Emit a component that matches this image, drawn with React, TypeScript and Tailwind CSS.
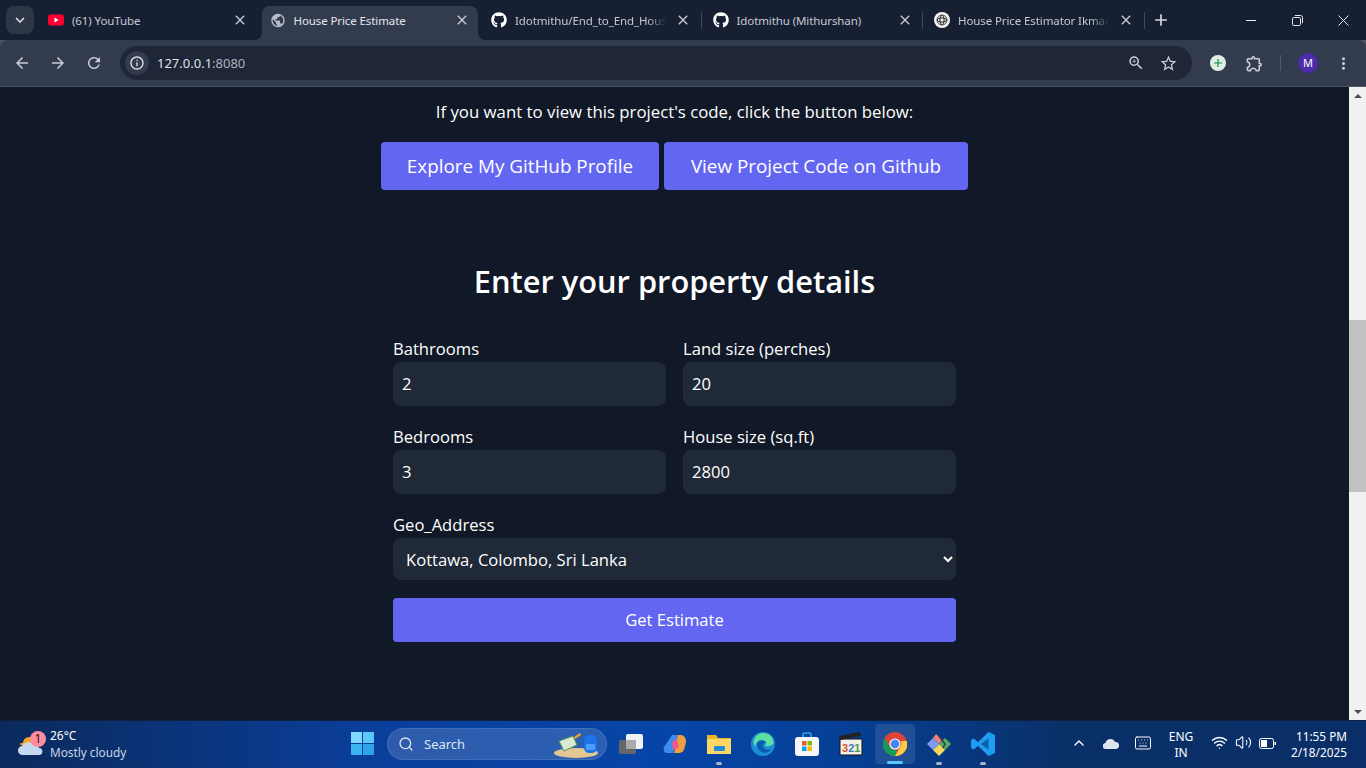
import { FaGithub } from "react-icons/fa";
import {
  MdArrowBack,
  MdArrowForward,
  MdRefresh,
  MdInfoOutline,
  MdStarBorder,
  MdOutlineExtension,
  MdMoreVert,
  MdZoomIn,
  MdPublic,
  MdClose,
  MdAdd,
  MdKeyboardArrowDown,
} from "react-icons/md";
import { ChevronUp, Search, Keyboard, Wifi, Volume2 } from "lucide-react";

const pageFont = "font-['Open_Sans',sans-serif]";
const uiFont = "font-['Noto_Sans',sans-serif]";

function YouTubeIcon() {
  return (
    <svg width="16" height="16" viewBox="0 0 16 16">
      <rect x="0" y="2.5" width="16" height="11" rx="3" fill="#ff0033" />
      <path d="M6.5 5.6 10.6 8l-4.1 2.4z" fill="#fff" />
    </svg>
  );
}

function GptIcon() {
  return (
    <svg width="16" height="16" viewBox="0 0 16 16">
      <circle cx="8" cy="8" r="8" fill="#f4f4f4" />
      <g fill="none" stroke="#333" strokeWidth="0.9">
        <circle cx="8" cy="8" r="5" />
        <circle cx="8" cy="8" r="3" strokeDasharray="1.5 1" />
        <ellipse cx="8" cy="8" rx="5" ry="2" />
        <ellipse cx="8" cy="8" rx="2" ry="5" />
      </g>
    </svg>
  );
}

type TabProps = {
  icon: React.ReactNode;
  title: string;
  active?: boolean;
  separator?: boolean;
  fade?: boolean;
};

function Tab({ icon, title, active, separator, fade }: TabProps) {
  return (
    <div
      className={`relative h-[34px] flex items-center pl-2 pb-[6px] rounded-t-lg ${
        active ? "bg-[#333c4e] w-[216px] mr-[5.5px]" : "w-[221.5px]"
      }`}
    >
      {active && (
        <>
          <span className="absolute left-[-8px] bottom-0 w-2 h-2 bg-[radial-gradient(circle_at_0_0,transparent_8px,#333c4e_8px)]" />
          <span className="absolute right-[-8px] bottom-0 w-2 h-2 bg-[radial-gradient(circle_at_100%_0,transparent_8px,#333c4e_8px)]" />
        </>
      )}
      <span className="w-4 h-4 flex items-center justify-center shrink-0">{icon}</span>
      <span
        className={`ml-2 pt-[1px] w-[156px] whitespace-nowrap overflow-hidden text-[11.5px] tracking-[-0.1px] ${
          active ? "text-[#e3e6ea]" : "text-[#c5cad3]"
        } ${fade ? "[mask-image:linear-gradient(to_right,black_85%,transparent_97%)]" : ""}`}
      >
        {title}
      </span>
      <MdClose className="ml-1 shrink-0 text-[#c9ced6]" size={16} />
      {separator && <span className="absolute right-[3px] top-[6px] h-[17px] w-px bg-[#414a5b]" />}
    </div>
  );
}

function TabStrip() {
  return (
    <div className="h-10 bg-[#172032] flex items-end pl-1 shrink-0 relative">
      <div className="absolute left-[6px] top-[6px] w-[28px] h-[28px] rounded-lg bg-[#2e3748] flex items-center justify-center">
        <MdKeyboardArrowDown className="text-[#e3e6ea]" size={18} />
      </div>
      <div className="ml-9 flex items-center self-end">
        <Tab icon={<YouTubeIcon />} title="(61) YouTube" />
        <Tab icon={<MdPublic className="text-[#b7bdc8]" size={17} />} title="House Price Estimate" active />
        <Tab icon={<FaGithub className="text-white" size={16} />} title="Idotmithu/End_to_End_Hous" separator fade />
        <Tab icon={<FaGithub className="text-white" size={16} />} title="Idotmithu (Mithurshan)" separator />
        <Tab icon={<GptIcon />} title="House Price Estimator Ikman" separator fade />
        <span className="ml-[3px] pb-[6px]">
          <MdAdd className="text-[#d5d9df]" size={20} />
        </span>
      </div>
      <div className="ml-auto flex h-full items-center text-[#e6e8ec]">
        <span className="w-[46px] flex justify-center">
          <span className="block w-[10px] h-px bg-[#e6e8ec]" />
        </span>
        <span className="w-[46px] flex justify-center">
          <svg width="11" height="11" viewBox="0 0 11 11" fill="none" stroke="#e6e8ec">
            <rect x="0.5" y="2.5" width="8" height="8" rx="1.2" />
            <path d="M2.8 0.5h5.7a2 2 0 0 1 2 2v5.7" />
          </svg>
        </span>
        <span className="w-[46px] flex justify-center">
          <svg width="11" height="11" viewBox="0 0 11 11" stroke="#e6e8ec">
            <path d="M0.5 0.5l10 10M10.5 0.5l-10 10" />
          </svg>
        </span>
      </div>
    </div>
  );
}

function Toolbar() {
  return (
    <div className="h-[47px] shrink-0 bg-[#4b5262]">
      <div className="h-[46px] bg-[#333c4e] rounded-tl-lg rounded-tr-lg flex items-center">
        <div className="w-[120px] flex items-center pl-[13px] gap-[18px] text-[#c8ccd4]">
          <MdArrowBack size={18} />
          <MdArrowForward size={18} />
          <MdRefresh size={18} />
        </div>
        <div className="w-[1072px] h-[34px] rounded-full bg-[#1e2637] flex items-center pl-[5px] pr-[14px]">
          <span className="w-6 h-6 rounded-full bg-[#333c4e] flex items-center justify-center">
            <MdInfoOutline className="text-[#dfe2e7]" size={16} />
          </span>
          <span className={`ml-2 pt-[1px] text-[13px] text-[#dfe3e8] ${uiFont}`}>
            127.0.0.1<span className="text-[#aab1bd]">:8080</span>
          </span>
          <MdZoomIn className="ml-auto text-[#c8ccd4]" size={18} />
          <MdStarBorder className="ml-[14px] text-[#c8ccd4]" size={19} />
        </div>
        <div className="flex-1 flex items-center pl-[18px]">
          <span className="w-4 h-4 rounded-full bg-[#dff0e3] flex items-center justify-center text-[#0f8a4a]">
            <MdAdd size={14} />
          </span>
          <MdOutlineExtension className="ml-[19px] text-[#c8ccd4]" size={19} />
          <span className="ml-[16px] w-px h-4 bg-[#525b6c]" />
          <span className="ml-[17px] w-5 h-5 rounded-full bg-[#4d2ca8] text-white text-[11px] flex items-center justify-center">
            M
          </span>
          <MdMoreVert className="ml-[16px] text-[#c8ccd4]" size={19} />
        </div>
      </div>
    </div>
  );
}

function Field({ label, value }: { label: string; value: string }) {
  return (
    <label className="block">
      <span className="block text-[16.6px] leading-[24px] text-white">{label}</span>
      <input
        type="text"
        defaultValue={value}
        className="mt-[1px] block w-full h-11 rounded-lg bg-[#1f2937] px-[9px] pb-[2px] text-[16.6px] text-white outline-none"
      />
    </label>
  );
}

function Scrollbar() {
  return (
    <div className="w-[17px] shrink-0 bg-[#f1f1f1] flex flex-col items-center">
      <div className="h-[17px] flex items-center justify-center">
        <span className="w-0 h-0 border-x-[4px] border-x-transparent border-b-[4px] border-b-[#505050]" />
      </div>
      <div className="h-[216px]" />
      <div className="h-[172px] w-full bg-[#c1c1c1]" />
      <div className="flex-1" />
      <div className="h-[17px] flex items-center justify-center">
        <span className="w-0 h-0 border-x-[4px] border-x-transparent border-t-[4px] border-t-[#505050]" />
      </div>
    </div>
  );
}

function Page() {
  return (
    <div className="flex flex-1 min-h-0">
      <main className={`flex-1 bg-[#111827] text-white ${pageFont}`}>
        <p className="mt-[13px] text-center text-[16.8px] leading-6">
          If you want to view this project's code, click the button below:
        </p>
        <div className="mt-[18px] flex justify-center gap-[5px]">
          <a className="w-[278px] h-12 rounded bg-[#6366f1] flex items-center justify-center text-[18.85px]">
            Explore My GitHub Profile
          </a>
          <a className="w-[304px] h-12 rounded bg-[#6366f1] flex items-center justify-center text-[18.85px]">
            View Project Code on Github
          </a>
        </div>
        <h2 className="mt-[69px] text-center text-[30.8px] leading-[44px] font-semibold">
          Enter your property details
        </h2>
        <form className="mt-[34px] mx-auto w-[563px]">
          <div className="grid grid-cols-2 gap-x-[17px] gap-y-[19px]">
            <Field label="Bathrooms" value="2" />
            <Field label="Land size (perches)" value="20" />
            <Field label="Bedrooms" value="3" />
            <Field label="House size (sq.ft)" value="2800" />
          </div>
          <label className="block mt-[19px]">
            <span className="block text-[16.6px] leading-[24px]">Geo_Address</span>
            <select
              defaultValue="Kottawa, Colombo, Sri Lanka"
              className="mt-[1px] block w-full h-[42px] rounded-lg bg-[#1f2937] px-[9px] text-[16.6px] text-white outline-none"
            >
              <option>Kottawa, Colombo, Sri Lanka</option>
            </select>
          </label>
          <button
            type="button"
            className="mt-[18px] block w-full h-11 rounded bg-[#6366f1] text-[16.6px] text-white"
          >
            Get Estimate
          </button>
        </form>
      </main>
      <Scrollbar />
    </div>
  );
}

function TaskIcon({ children, dot, active }: { children: React.ReactNode; dot?: boolean; active?: boolean }) {
  return (
    <div
      className={`relative w-10 h-10 rounded flex items-center justify-center mx-[2px] ${
        active ? "bg-white/10" : ""
      }`}
    >
      {children}
      {dot && <span className="absolute bottom-[-1px] left-[17px] w-[6px] h-[3px] rounded-full bg-[#a9b4c6]" />}
      {active && <span className="absolute bottom-0 left-[12px] w-4 h-[3px] rounded-full bg-[#5cc8fa]" />}
    </div>
  );
}

function Taskbar() {
  return (
    <footer
      className={`h-[48px] shrink-0 relative flex items-center pb-[1px] border-t border-[#10203f] bg-[linear-gradient(90deg,#0b2a5c_0%,#0a3f9c_28%,#0645a8_48%,#063f95_62%,#0a3068_78%,#0a2f68_100%)] text-white ${uiFont}`}
    >
      <div className="w-[387px] flex items-center pl-[18px] relative">
        <svg width="26" height="24" viewBox="0 0 26 24">
          <circle cx="11" cy="11" r="6" fill="#f5a623" />
          <path d="M1 12l6-2 1 5z" fill="#f5a623" />
          <path d="M5 23a4.500 4.500 0 0 1-1-9 7 7 0 0 1 11-2 6 6 0 0 1 6 4 3.600 3.600 0 0 1 1 7z" fill="#c5d9f2" />
        </svg>
        <span className="absolute left-[30px] top-[3px] w-4 h-4 rounded-full bg-[#fb8ea0] text-[#3a0a14] text-[12px] leading-4 text-center">
          1
        </span>
        <div className="ml-[6px]">
          <div className="text-[12px] leading-[16px]">26°C</div>
          <div className="text-[11.8px] leading-[16px] text-[#c9d5e8]">Mostly cloudy</div>
        </div>
      </div>

      <div className="absolute left-[351px] top-[11px] grid grid-cols-2 gap-px w-[23px] h-[23px]">
        <span className="bg-[#7fd8ff]" />
        <span className="bg-[#5cc8fa]" />
        <span className="bg-[#3bb4f2]" />
        <span className="bg-[#2ea4ea]" />
      </div>

      <div className="w-[220px] h-8 rounded-full bg-white/15 border border-white/10 flex items-center pl-[10px] relative">
        <Search size={16} className="text-[#dce6f5]" />
        <span className="ml-[10px] pt-[1px] text-[13px] text-[#dce6f5]">Search</span>
        <svg className="absolute right-[6px] top-[2px]" width="46" height="28" viewBox="0 0 46 28">
          <ellipse cx="22" cy="22" rx="22" ry="5" fill="#e3c792" />
          <path d="M5 10l14-5 4 9-13 6z" fill="#d8ead2" stroke="#4f8f5a" />
          <path d="M20 6l6-4 1 2-6 4z" fill="#f5a623" />
          <rect x="30" y="4" width="13" height="18" rx="5" fill="#1c74e8" />
          <rect x="32" y="13" width="9" height="6" rx="1" fill="#4aa0ff" />
        </svg>
      </div>

      <div className="ml-[2px] flex items-center">
        <TaskIcon>
          <svg width="26" height="22" viewBox="0 0 26 22">
            <rect x="1" y="7" width="17" height="14" rx="2" fill="#666" />
            <rect x="8" y="1" width="17" height="15" rx="2" fill="#f2f2f2" />
            <rect x="8" y="7" width="10" height="9" fill="#a9a9a9" />
          </svg>
        </TaskIcon>
        <TaskIcon>
          <svg width="24" height="22" viewBox="0 0 24 22">
            <path d="M9 2h6l-5 18H4C1 20 0 17 1 14z" fill="#3c8cf0" />
            <path d="M9 2c3-1 5 0 6 3l3 8-6 7 5-18z" fill="#a04be0" />
            <path d="M15 2h3c3 0 5 3 5 7l-2 8c-1 2-3 3-5 3h-5z" fill="#f0a040" />
            <path d="M9 9l5-3 2 8-6 3z" fill="#f05a90" />
          </svg>
        </TaskIcon>
        <TaskIcon dot>
          <svg width="24" height="22" viewBox="0 0 24 22">
            <path d="M0 2h9l2 3h13v15H0z" fill="#f0b429" />
            <rect x="0" y="6" width="24" height="15" fill="#fcd766" />
            <rect x="7" y="13" width="11" height="5" rx="1" fill="#1f8ce0" />
          </svg>
        </TaskIcon>
        <TaskIcon>
          <svg width="24" height="24" viewBox="0 0 24 24">
            <circle cx="12" cy="12" r="12" fill="#1a8fd8" />
            <path d="M3 8a10 10 0 0 1 19 0c2 5-4 7-8 6 3-4-1-7-5-6-3 1-5 4-4 7-2-2-3-5-2-7z" fill="#5fe0a0" />
            <path d="M6 13c0-4 7-6 9-2-4 0-4 4-1 6 2 1 5 1 7 0-3 4-9 5-12 2-2-1-3-4-3-6z" fill="#0b5cb0" />
          </svg>
        </TaskIcon>
        <TaskIcon>
          <svg width="24" height="24" viewBox="0 0 24 24">
            <path d="M8 5V3a2 2 0 0 1 2-2h4a2 2 0 0 1 2 2v2" fill="none" stroke="#2aa5e8" strokeWidth="1.6" />
            <rect x="0" y="5" width="24" height="19" rx="3" fill="#f4f6f8" />
            <rect x="7" y="9" width="4.5" height="4.5" fill="#ef5b2b" />
            <rect x="12.5" y="9" width="4.5" height="4.5" fill="#7fba00" />
            <rect x="7" y="14.5" width="4.5" height="4.5" fill="#00a4ef" />
            <rect x="12.5" y="14.5" width="4.5" height="4.5" fill="#ffb900" />
          </svg>
        </TaskIcon>
        <TaskIcon>
          <svg width="24" height="24" viewBox="0 0 24 24">
            <rect x="1" y="7" width="22" height="16" rx="1" fill="#f2efe6" stroke="#111" />
            <path d="M0 4l21-4 1 4-21 4z" fill="#222" />
            <text x="3" y="20" fontSize="11" fontWeight="700" fontFamily="Liberation Sans, sans-serif">
              <tspan fill="#d0562c">3</tspan>
              <tspan fill="#3a7abf">2</tspan>
              <tspan fill="#4a9a4a">1</tspan>
            </text>
          </svg>
        </TaskIcon>
        <TaskIcon active>
          <svg width="24" height="24" viewBox="0 0 24 24">
            <circle cx="12" cy="12" r="12" fill="#db4437" />
            <path d="M12 24a12 12 0 0 1-10.4-18l5.2 9a6 6 0 0 0 6.9 2.7z" fill="#0f9d58" />
            <path d="M12 24l5.2-9A6 6 0 0 0 18 9h6a12 12 0 0 1-12 15z" fill="#ffcd40" />
            <circle cx="12" cy="12" r="5.6" fill="#fff" />
            <circle cx="12" cy="12" r="4.4" fill="#4285f4" />
          </svg>
        </TaskIcon>
        <TaskIcon dot>
          <svg width="24" height="24" viewBox="0 0 24 24">
            <path d="M12 12L6 6l3-4 6 6z" fill="#ef7d7d" />
            <path d="M12 12l6-6 6 6-6 6z" fill="#57b05c" />
            <path d="M12 12l6 6-6 6-6-6z" fill="#f5d75a" />
            <path d="M12 12l-6 6-6-6 6-6z" fill="#7d9cf0" />
            <path d="M12 4l6 8-2 4" fill="none" stroke="#2a3a5a" strokeWidth="1.5" />
          </svg>
        </TaskIcon>
        <TaskIcon dot>
          <svg width="24" height="24" viewBox="0 0 24 24">
            <path d="M17.5 0L24 3v18l-6.500 3L7 14l-4.500 3.500L0 16V8l2.500-1.500L7 10z" fill="#1f9cf0" />
            <path d="M17.500 6.500L10 12l7.500 5.500z" fill="#0b5fa8" />
          </svg>
        </TaskIcon>
      </div>

      <div className="ml-auto flex items-center text-white">
        <ChevronUp size={16} className="absolute left-[1071px] top-[14px]" />
        <svg className="absolute left-[1103px] top-[17px]" width="16" height="11" viewBox="0 0 16 11">
          <path d="M3 11a3 3 0 0 1-.500-6 5 5 0 0 1 9.500-1 3.500 3.500 0 0 1 1 7z" fill="#dfe6f0" />
        </svg>
        <Keyboard size={18} strokeWidth={1.3} className="absolute left-[1134px] top-[13px]" />
        <div className="absolute left-[1166px] top-[8px] w-[30px] text-center text-[12px] leading-[16px]">
          ENG
          <br />
          IN
        </div>
        <Wifi size={17} className="absolute left-[1211px] top-[13px]" />
        <Volume2 size={17} strokeWidth={1.5} className="absolute left-[1235px] top-[13px]" />
        <svg className="absolute left-[1259px] top-[17px]" width="17" height="11" viewBox="0 0 17 11">
          <rect x="0.500" y="0.500" width="14" height="10" rx="2" fill="none" stroke="#fff" />
          <rect x="2" y="2" width="6" height="7" fill="#fff" />
          <rect x="15.500" y="4" width="1.500" height="3" fill="#fff" />
        </svg>
        <div className="absolute right-[19px] top-[7px] text-right text-[11.8px] leading-[16px]">
          <div>11:55 PM</div>
          <div>2/18/2025</div>
        </div>
      </div>
    </footer>
  );
}

export default function App() {
  return (
    <div className={`w-[1366px] h-screen overflow-hidden flex flex-col ${uiFont}`}>
      <TabStrip />
      <Toolbar />
      <Page />
      <Taskbar />
    </div>
  );
}
